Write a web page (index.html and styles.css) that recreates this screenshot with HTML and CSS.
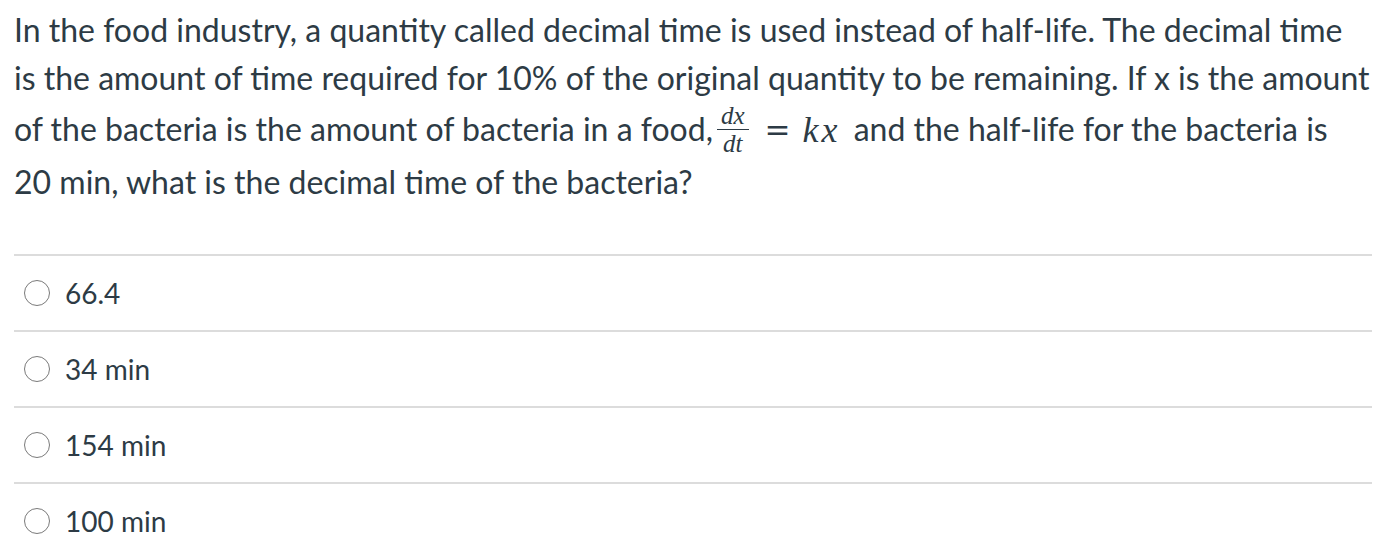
FILE: index.html
```html
<!DOCTYPE html>
<html>
<head>
<meta charset="utf-8">
<link rel="stylesheet" href="styles.css">
</head>
<body>
<div class="question">
  <p class="stem">In the food industry, a quantity called decimal time is used instead of half-life. The decimal time is the amount of time required for 10% of the original quantity to be remaining. If x is the amount of the bacteria is the amount of bacteria in a food,<span class="math"><span class="frac"><span class="num">dx</span><span class="den">dt</span></span><span class="eq">=</span><span class="mi">kx</span></span> and the half-life for the bacteria is 20&nbsp;min, what is the decimal time of the bacteria?</p>
  <div class="answers">
    <label class="answer"><span class="radio"></span><span class="atext">66.4</span></label>
    <label class="answer"><span class="radio"></span><span class="atext">34 min</span></label>
    <label class="answer"><span class="radio"></span><span class="atext">154 min</span></label>
    <label class="answer"><span class="radio"></span><span class="atext">100 min</span></label>
  </div>
</div>
</body>
</html>
```

FILE: styles.css
```css
html, body {
  margin: 0;
  padding: 0;
  background: #fff;
}
body {
  font-family: Lato, "Noto Sans", sans-serif;
  color: #2d3b45;
}
.question {
  padding: 0 20px 0 14px;
}
.stem {
  margin: 0;
  padding-top: 6px;
  font-size: 32px;
  line-height: 48px;
}
.math {
  display: inline-flex;
  align-items: center;
  vertical-align: 17px;
  font-family: "Liberation Serif", "DejaVu Serif", serif;
  margin-left: 4px;
  padding: 3px 0;
  line-height: 1;
}
.frac {
  display: inline-flex;
  flex-direction: column;
  align-items: center;
  font-style: italic;
  font-size: 25px;
  line-height: 22px;
}
.num {
  align-self: stretch;
  text-align: center;
  border-bottom: 1.5px solid #2d3b45;
  padding: 0 4px 2px;
}
.den {
  padding: 3px 4px 0;
}
.eq {
  font-family: "DejaVu Serif", "Liberation Serif", serif;
  font-size: 31px;
  margin: 0 12px 0 16px;
}
.mi {
  font-style: italic;
  font-size: 36px;
  letter-spacing: 3px;
  margin-right: 5px;
}
.answers {
  margin-top: 48px;
  border-top: 2px solid #dcdcdc;
}
.answer {
  display: flex;
  align-items: center;
  height: 74px;
  border-bottom: 2px solid #dcdcdc;
  font-size: 28px;
}
.radio {
  width: 26px;
  height: 26px;
  border: 1.5px solid #7a7a7a;
  border-radius: 50%;
  box-sizing: border-box;
  margin-left: 10px;
  margin-right: 15px;
}
```
